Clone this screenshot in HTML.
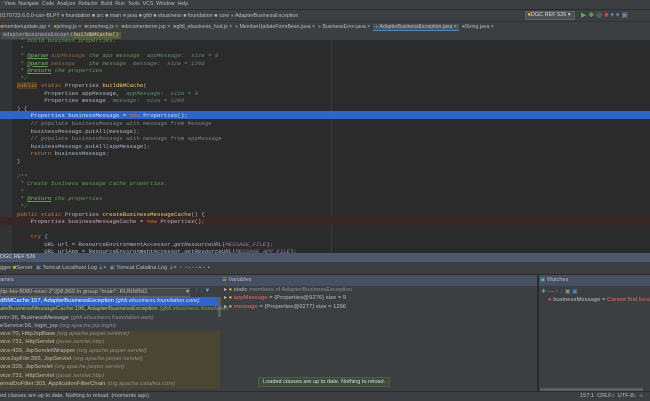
<!DOCTYPE html>
<html><head><meta charset="utf-8"><style>
*{margin:0;padding:0;box-sizing:border-box}
body{width:650px;height:400px;overflow:hidden;background:#3c3f41;font-family:"Liberation Sans",sans-serif;color:#bbbbbb;position:relative}
.a{position:absolute;white-space:nowrap}
.ui{font-size:6.2px}
.code{font-family:"Liberation Mono",monospace;font-size:5.7px;color:#a9b7c6}
.k{color:#cc7832}.c{color:#808080}.d{color:#629755;font-style:italic}.t{color:#629755;font-weight:bold;text-decoration:underline;font-style:italic}
.p{color:#8a653b;font-style:italic}.v{color:#5e8c6a;font-style:italic}.m{color:#ffc66d}.cn{color:#9876aa;font-style:italic}
.fr{font-size:5.9px;color:#bbb}.fr i{color:#8c8c8c}
</style></head><body>
<!-- menu -->
<div class="a ui" style="left:0;top:0;width:650px;height:9px;background:#3c3f41;line-height:9px;color:#bbb;font-size:5.2px">&nbsp;: View &nbsp;Navigate &nbsp;Code &nbsp;Analyze &nbsp;Refactor &nbsp;Build &nbsp;Run &nbsp;Tools &nbsp;VCS &nbsp;Window &nbsp;Help</div>
<!-- nav -->
<div class="a ui" style="left:0;top:9px;width:650px;height:12px;background:#3c3f41;line-height:12px;border-top:1px solid #2b2b2b;font-size:5.3px">0170723.6.0.0-carr-BLP!! <span style="color:#6a8bb8">■</span> foundation <span style="color:#aaa">■</span> src <span style="color:#aaa">■</span> main <span style="color:#6a8bb8">■</span> java <span style="color:#aaa">■</span> gfdi <span style="color:#aaa">■</span> ebusiness <span style="color:#aaa">■</span> foundation <span style="color:#aaa">■</span> core <span style="color:#4a88c7">●</span> AdapterBusinessException</div>
<div class="a ui" style="left:525px;top:11px;width:50px;height:9px;background:#4c5052;border:1px solid #5e6060;line-height:7px;font-size:5.5px;color:#ddd">&nbsp;<span style="color:#d8a93c">■</span>DGC REF 526 ▾</div>
<div class="a" style="left:581px;top:12px;font-size:7px;color:#4caf50;line-height:7px">▶ <span style="color:#5f9e5f">✱</span> <span style="color:#6a9">◎</span> <span style="color:#c44">■</span> <span style="color:#6a8bb8">▾ ▾ ▣</span></div>
<!-- tabs -->
<div class="a ui" style="left:0;top:21px;width:650px;height:10px;background:#3c3f41;line-height:10px;font-size:5.2px;border-top:1px solid #333">
<span style="color:#c08040">■</span>memberupdate.jsp × &nbsp;<span style="color:#c08040">■</span>js/msg.js × &nbsp;<span style="color:#c08040">■</span>core/msg.js × &nbsp;<span style="color:#c08040">■</span>documenterror.jsp × &nbsp;<span style="color:#c08040">■</span>gfdi_ebusiness_hod.js × &nbsp;<span style="color:#4a88c7">●</span> MemberUpdateFormBean.java × &nbsp;<span style="color:#4a88c7">●</span> BusinessError.java × &nbsp;<span style="background:#4e5254;border-bottom:1px solid #4a88c7;padding:0 2px"><span style="color:#4a88c7">●</span> AdapterBusinessException.java ×</span> &nbsp;<span style="color:#6a8bb8">■</span>String.java ×</div>
<!-- breadcrumb -->
<div class="a" style="left:0;top:31px;width:650px;height:9px;background:#3c3f41"></div>
<div class="a" style="left:1px;top:32px;height:7px;padding:0 2px;background:#4b4f52;font-family:'Liberation Mono',monospace;font-size:5.3px;line-height:7px;color:#aaa">AdapterBusinessException</div>
<div class="a" style="left:72px;top:32px;height:7px;padding:0 2px;background:#5a5a3c;font-family:'Liberation Mono',monospace;font-size:5.3px;line-height:7px;color:#ccc">buildBMCache()</div>
<!-- editor -->
<div class="a" style="left:0;top:40px;width:650px;height:213px;background:#2b2b2b"></div>
<div class="a" style="left:0;top:40px;width:12px;height:213px;background:#313335"></div>
<div class="a" style="left:331px;top:40px;width:1px;height:213px;background:#3a3a3a"></div>
<div class="a" style="left:0;top:111px;width:650px;height:8px;background:#2f65ca"></div>
<div class="a" style="left:0;top:217px;width:650px;height:8px;background:#3b2626"></div>
<div class="a code" style="left:17px;top:37px;line-height:7.55px">
<div class="d">&nbsp;* build business properties.</div>
<div class="d">&nbsp;*</div>
<div class="d">&nbsp;* <span class="t">@param</span> <span class="p">appMessage</span> the app message &nbsp;<span class="v">appMessage: &nbsp;size = 9</span></div>
<div class="d">&nbsp;* <span class="t">@param</span> <span class="p">message</span> &nbsp;&nbsp;&nbsp;the message &nbsp;<span class="v">message: &nbsp;size = 1266</span></div>
<div class="d">&nbsp;* <span class="t">@return</span> the properties</div>
<div class="d">&nbsp;*/</div>
<div><span class="k" style="background:#4a4020">public</span> <span class="k">static</span> Properties <span class="m">buildBMCache</span>(</div>
<div>&nbsp;&nbsp;&nbsp;&nbsp;&nbsp;&nbsp;&nbsp;&nbsp;Properties appMessage, &nbsp;<span class="v">appMessage: &nbsp;size = 9</span></div>
<div>&nbsp;&nbsp;&nbsp;&nbsp;&nbsp;&nbsp;&nbsp;&nbsp;Properties message &nbsp;<span class="v">message: &nbsp;size = 1266</span></div>
<div>) {</div>
<div style="color:#dde">&nbsp;&nbsp;&nbsp;&nbsp;Properties businessMessage = <span class="k">new</span> Properties();</div>
<div class="c">&nbsp;&nbsp;&nbsp;&nbsp;// populate businessMessage with message from Message</div>
<div>&nbsp;&nbsp;&nbsp;&nbsp;businessMessage.putAll(message)<span class="k">;</span></div>
<div class="c">&nbsp;&nbsp;&nbsp;&nbsp;// populate businessMessage with message from appMessage</div>
<div>&nbsp;&nbsp;&nbsp;&nbsp;businessMessage.putAll(appMessage)<span class="k">;</span></div>
<div>&nbsp;&nbsp;&nbsp;&nbsp;<span class="k">return</span> businessMessage<span class="k">;</span></div>
<div>}</div>
<div>&nbsp;</div>
<div class="d">/**</div>
<div class="d">&nbsp;* Create business message cache properties.</div>
<div class="d">&nbsp;*</div>
<div class="d">&nbsp;* <span class="t">@return</span> the properties</div>
<div class="d">&nbsp;*/</div>
<div><span class="k">public static</span> Properties <span class="m">createBusinessMessageCache</span>() {</div>
<div>&nbsp;&nbsp;&nbsp;&nbsp;Properties businessMessageCache = <span class="k">new</span> Properties()<span class="k">;</span></div>
<div>&nbsp;</div>
<div>&nbsp;&nbsp;&nbsp;&nbsp;<span class="k">try</span> {</div>
<div>&nbsp;&nbsp;&nbsp;&nbsp;&nbsp;&nbsp;&nbsp;&nbsp;URL url = ResourceEnvironmentAccessor.<i>getResourceURL</i>(<span class="cn">MESSAGE_FILE</span>)<span class="k">;</span></div>
<div>&nbsp;&nbsp;&nbsp;&nbsp;&nbsp;&nbsp;&nbsp;&nbsp;URL urlApp = ResourceEnvironmentAccessor.<i>getResourceURL</i>(<span class="cn">MESSAGE_APP_FILE</span>)<span class="k">;</span></div>
</div>
<!-- debug title -->
<div class="a ui" style="left:0;top:253px;width:650px;height:9px;background:#4b5870;line-height:9px;font-size:5.5px;color:#ddd">DGC REF 526</div>
<!-- toolbar -->
<div class="a ui" style="left:0;top:262px;width:650px;height:13px;background:#3c3f41;line-height:13px;font-size:5.6px;border-bottom:1px solid #2b2b2b">gger <span style="color:#d8a93c">■</span>Server &nbsp;<span style="color:#6a8bb8">▣</span> Tomcat Localhost Log ⇣× &nbsp;<span style="color:#6a8bb8">▣</span> Tomcat Catalina Log ⇣× &nbsp;<span style="color:#c44">▪</span> &nbsp;<span style="color:#4a88c7">▪ ▪</span> <span style="color:#c44">▪</span> <span style="color:#4a88c7">▪</span> <span style="color:#aaa">▪</span> <span style="color:#4a88c7">▪</span> &nbsp;<span style="color:#aaa">▪</span></div>
<!-- panel headers -->
<div class="a ui" style="left:0;top:275px;width:650px;height:11px;background:#465062;line-height:11px;font-size:5.6px">ames</div>
<div class="a ui" style="left:222px;top:275px;height:11px;line-height:11px;font-size:5.6px"><span style="color:#d8a93c">☰</span> Variables</div>
<div class="a" style="left:537px;top:275px;width:2px;height:116px;background:#2b2b2b"></div>
<div class="a ui" style="left:540px;top:275px;height:11px;line-height:11px;font-size:5.6px"><span style="color:#6a9">▣</span> Watches</div>
<!-- frames -->
<div class="a" style="left:0;top:286px;width:220px;height:105px;background:#3c3f41"></div>
<div class="a fr" style="left:0;top:288px;width:190px;height:9px;background:#45494a;border:1px solid #5e6060;line-height:7px">ttp-bio-8080-exec-2"@8,860 in group "main": RUNNING <span style="float:right">▾</span></div>
<div class="a" style="left:195px;top:288px;font-size:6px;color:#4a88c7">↑ ↓ <span style="color:#3fa9e0">▼</span></div>
<div class="a" style="left:0;top:297px;width:220px;height:9px;background:#2f65ca"></div>
<div class="a" style="left:0;top:331px;width:220px;height:58px;background:#4a4634"></div>
<div class="a" style="left:218px;top:297px;width:3px;height:20px;background:#5a5d5f"></div>
<div class="a fr" style="left:0;top:297px;line-height:8.3px">
<div style="color:#fff">dBMCache:157, AdapterBusinessException <i style="color:#dde">(gfdi.ebusiness.foundation.core)</i></div>
<div>ateBusinessMessageCache:196, AdapterBusinessException <i>(gfdi.ebusiness.foundation</i></div>
<div>nit&gt;:36, BusinessMessage <i>(gfdi.ebusiness.foundation.web)</i></div>
<div>eService:56, login_jsp <i>(org.apache.jsp.login)</i></div>
<div>vice:70, HttpJspBase <i>(org.apache.jasper.runtime)</i></div>
<div>vice:731, HttpServlet <i>(javax.servlet.http)</i></div>
<div>vice:439, JspServletWrapper <i>(org.apache.jasper.servlet)</i></div>
<div>viceJspFile:395, JspServlet <i>(org.apache.jasper.servlet)</i></div>
<div>vice:339, JspServlet <i>(org.apache.jasper.servlet)</i></div>
<div>vice:731, HttpServlet <i>(javax.servlet.http)</i></div>
<div>ernalDoFilter:303, ApplicationFilterChain <i>(org.apache.catalina.core)</i></div>
</div>
<!-- variables -->
<div class="a fr" style="left:224px;top:286px;line-height:8.3px">
<div>▸ <span style="color:#d8a93c">●</span> static <span style="color:#8c8c8c">members of AdapterBusinessException</span></div>
<div>▸ <span style="color:#d8a93c">●</span> <span style="color:#e06c6c">appMessage</span> = {Properties@9276} size = 9</div>
<div>▸ <span style="color:#d8a93c">●</span> <span style="color:#e06c6c">message</span> = {Properties@9277} size = 1266</div>
</div>
<!-- watches -->
<div class="a" style="left:541px;top:288px;font-size:6px;color:#888"><span style="color:#5a5">✚</span> — ↑ ↓ ▣ <span style="color:#4a88c7">▣</span></div>
<div class="a fr" style="left:548px;top:296px;line-height:8px"><span style="color:#e05050">●</span> businessMessage = <span style="color:#e06c6c">Cannot find local</span></div>
<div class="a" style="left:540px;top:388px;width:103px;height:3px;background:#5a5d5f"></div>
<!-- balloon -->
<div class="a fr" style="left:258px;top:377px;height:10px;padding:0 4px;background:#3d4c3a;border:1px solid #4d5d4a;line-height:9px;font-size:5.6px;color:#ddd">Loaded classes are up to date. Nothing to reload.</div>
<!-- status -->
<div class="a ui" style="left:0;top:391px;width:650px;height:9px;background:#3c3f41;line-height:9px;font-size:5.6px;border-top:1px solid #2b2b2b">ed classes are up to date. Nothing to reload. (moments ago)<span style="position:absolute;left:580px">157:1 &nbsp;CRLF↕ &nbsp;UTF-8↕ &nbsp;⌂</span></div>
</body></html>
